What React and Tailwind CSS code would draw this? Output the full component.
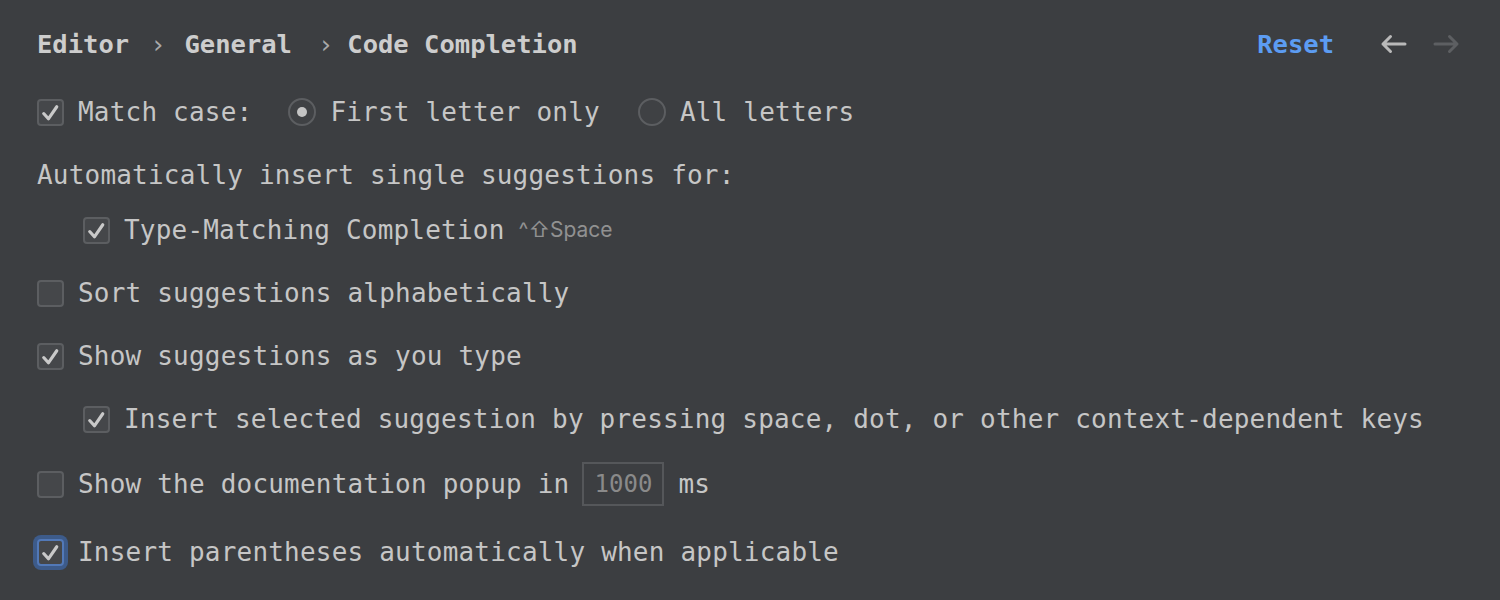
import React from 'react';

const mono = "font-['DejaVu_Sans_Mono','Liberation_Mono',monospace]";

const Checkbox = ({ checked, focused }) => (
  <span
    className={`flex h-[27px] w-[27px] shrink-0 items-center justify-center rounded-[4px] border-2 bg-[#45474a] ${
      focused ? 'border-[#5279b8] ring-4 ring-[#3d5b8a]' : 'border-[#5c5e61]'
    }`}
  >
    {checked && (
      <svg width="23" height="23" viewBox="0 0 22 22" fill="none">
        <path d="M4.5 12 L9 17 L17 5.5" stroke="#c9c9c9" strokeWidth="3" strokeLinecap="round" strokeLinejoin="round" />
      </svg>
    )}
  </span>
);

const Radio = ({ selected }) => (
  <span className="flex h-[28px] w-[28px] shrink-0 items-center justify-center rounded-full border-2 border-[#5c5e61] bg-[#3f4144]">
    {selected && <span className="h-[10px] w-[10px] rounded-full bg-[#c4c4c4]" />}
  </span>
);

const Row = ({ indent, className = '', children }) => (
  <div className={`flex h-[40px] items-center ${indent ? 'pl-[46px]' : ''} ${className}`}>{children}</div>
);

const CheckRow = ({ checked, focused, indent, className, label, extra }) => (
  <Row indent={indent} className={className}>
    <Checkbox checked={checked} focused={focused} />
    <span className="ml-[14px] whitespace-pre">{label}</span>
    {extra}
  </Row>
);

export default function App() {
  return (
    <div className={`h-[600px] w-[1500px] overflow-hidden bg-[#3c3e41] pl-[37px] pr-[40px] pt-[24px] text-[26px] tracking-[0.2px] text-[#c6c6c6] ${mono}`}>
      {/* Breadcrumb header */}
      <div className="flex h-[40px] items-center justify-between">
        <div className="flex items-center text-[25.5px] font-bold tracking-normal text-[#cdcdcd]">
          <span>Editor</span>
          <span className="ml-[21px] font-normal text-[#a9a9a9]">›</span>
          <span className="ml-[19px]">General</span>
          <span className="ml-[26px] font-normal text-[#a9a9a9]">›</span>
          <span className="ml-[14px]">Code Completion</span>
        </div>
        <div className="flex items-center">
          <span className="text-[25.5px] font-bold tracking-normal text-[#5c9cf2]">Reset</span>
          <svg className="ml-[46px]" width="27" height="20" viewBox="0 0 27 20" fill="none">
            <path d="M25 10 H3 M10.5 2.5 L3 10 L10.5 17.5" stroke="#b9b9b9" strokeWidth="3" strokeLinecap="round" strokeLinejoin="round" />
          </svg>
          <svg className="ml-[26px]" width="27" height="20" viewBox="0 0 27 20" fill="none">
            <path d="M2 10 H24 M16.5 2.5 L24 10 L16.5 17.5" stroke="#5d5f62" strokeWidth="3" strokeLinecap="round" strokeLinejoin="round" />
          </svg>
        </div>
      </div>

      {/* Match case */}
      <Row className="mt-[28px]">
        <Checkbox checked />
        <span className="ml-[14px] whitespace-pre">Match case:</span>
        <span className="ml-[36px]"><Radio selected /></span>
        <span className="ml-[14px] whitespace-pre">First letter only</span>
        <span className="ml-[38px]"><Radio /></span>
        <span className="ml-[14px] whitespace-pre">All letters</span>
      </Row>

      <Row className="mt-[23px]">
        <span className="whitespace-pre">Automatically insert single suggestions for:</span>
      </Row>

      <CheckRow
        checked
        indent
        className="mt-[15px]"
        label="Type-Matching Completion"
        extra={
          <span className="ml-[14px] font-['Inter','Noto_Sans',sans-serif] text-[21px] tracking-normal text-[#919191]">^⇧Space</span>
        }
      />

      <CheckRow className="mt-[23px]" label="Sort suggestions alphabetically" />
      <CheckRow checked className="mt-[23px]" label="Show suggestions as you type" />
      <CheckRow
        checked
        indent
        className="mt-[23px]"
        label="Insert selected suggestion by pressing space, dot, or other context-dependent keys"
      />

      {/* Documentation popup */}
      <div className="mt-[23px] flex h-[44px] items-center">
        <Checkbox />
        <span className="ml-[14px] whitespace-pre">Show the documentation popup in</span>
        <span className="ml-[13px] flex h-[44px] w-[82px] items-center justify-center border-2 border-[#55575a] text-[24px] tracking-normal text-[#8a8a8a]">
          1000
        </span>
        <span className="ml-[14px]">ms</span>
      </div>

      <CheckRow checked focused className="mt-[26px]" label="Insert parentheses automatically when applicable" />
    </div>
  );
}
